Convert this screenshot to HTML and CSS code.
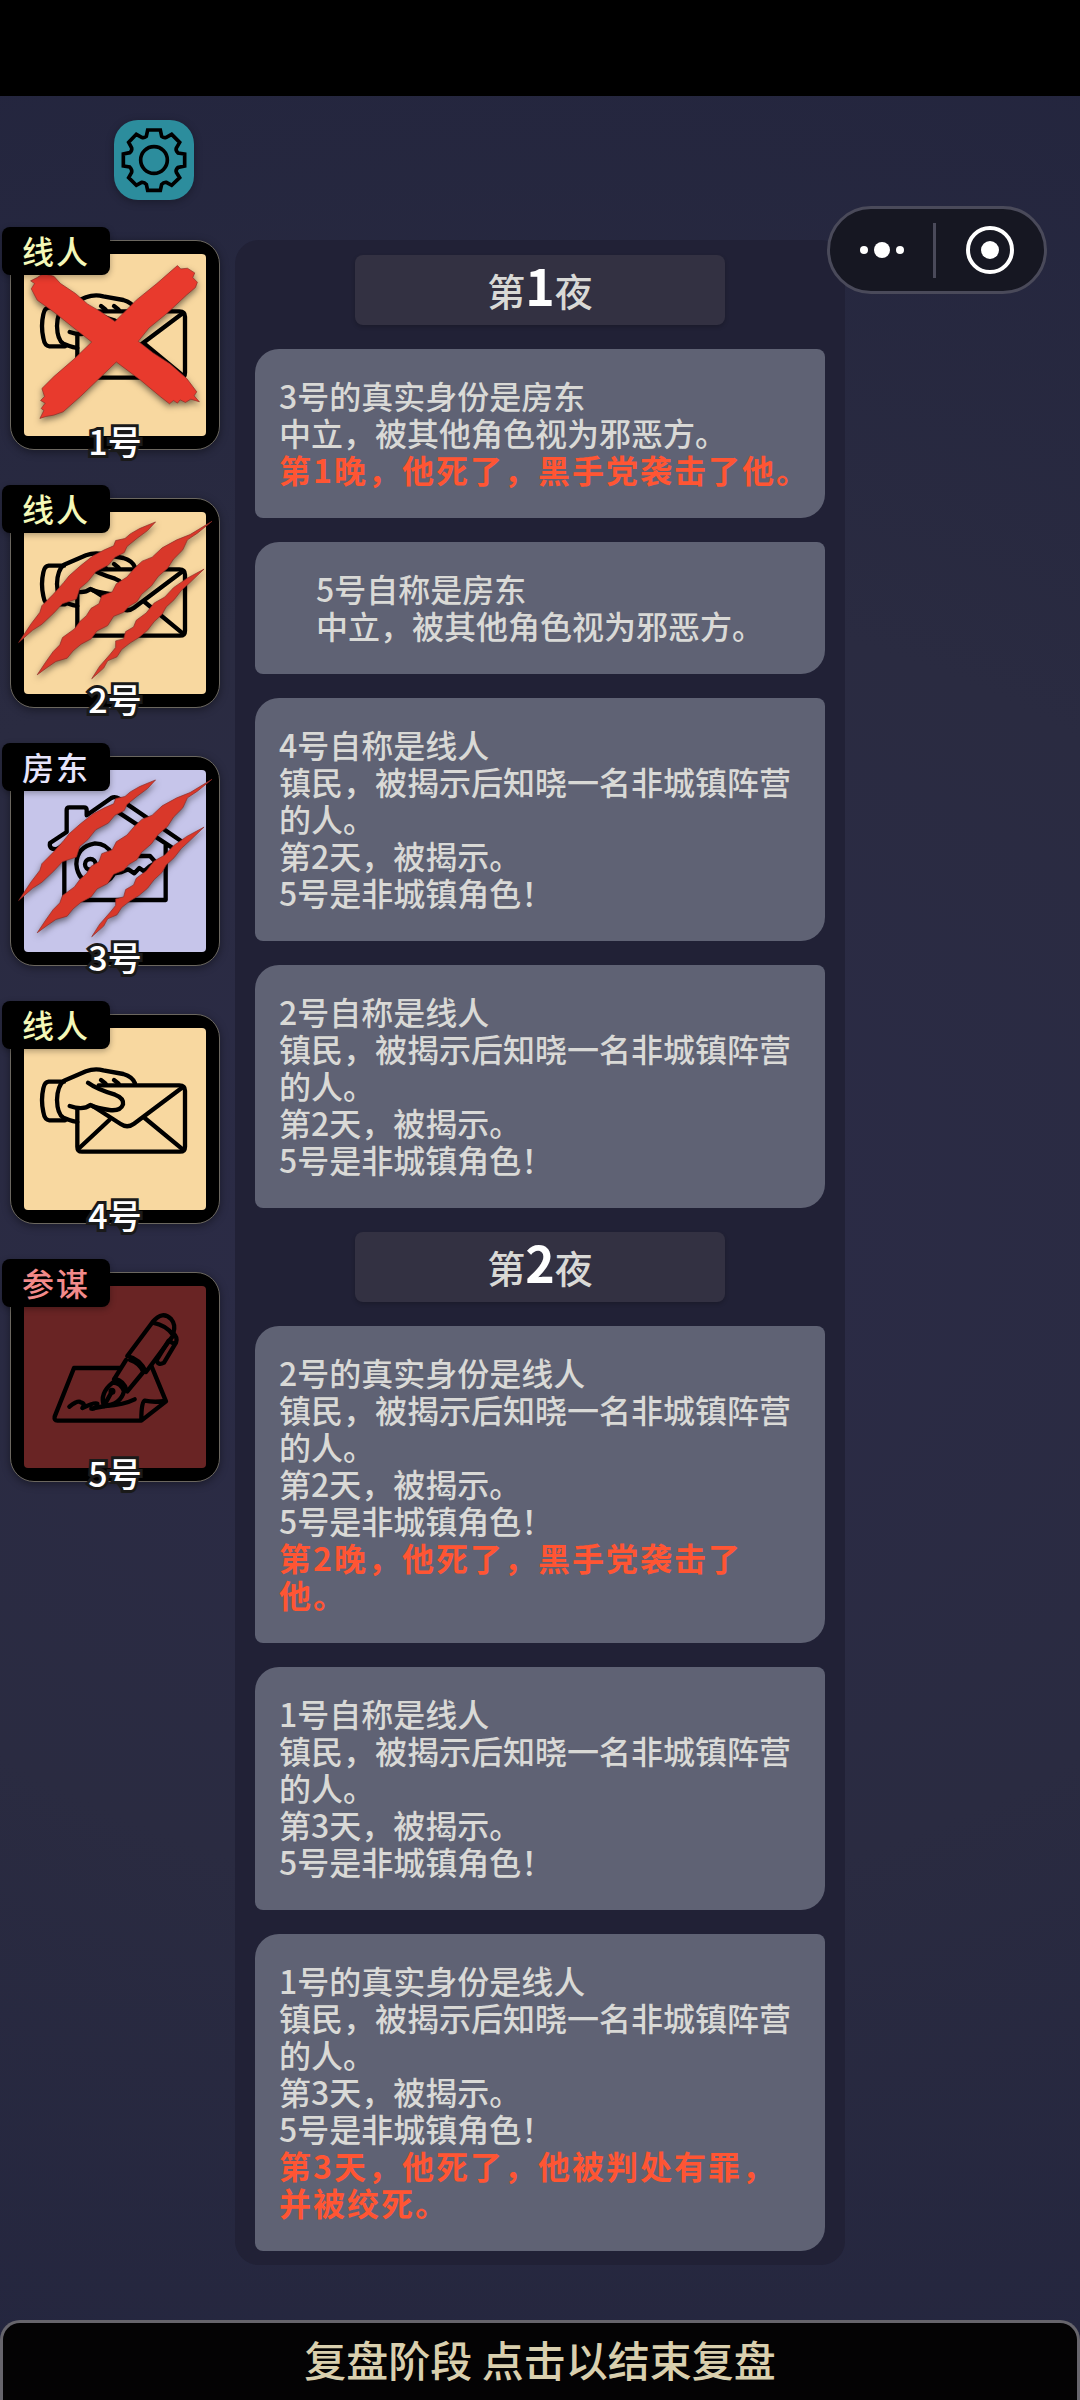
FILE: index.html
```html
<!DOCTYPE html>
<html lang="zh-CN">
<head>
  <meta charset="UTF-8">
  <meta name="viewport" content="width=device-width, initial-scale=1.0">
  <title>复盘阶段</title>
  <link rel="stylesheet" href="styles.css">
</head>
<body>

<!-- 图标库 -->
<svg class="sprite" aria-hidden="true">
  <symbol id="icon-letter" viewBox="72 114 546 546">
    <path d="M192 275H146Q134 276 130 295Q122 330 130 366Q134 390 148 391H195"/>
    <path d="M232 396Q205 390 190 383Q172 372 171 330Q172 288 192 272L258 244Q284 234 310 241L370 252Q398 260 405 280"/>
    <path d="M264 278Q290 297 345 314Q372 324 369 343Q362 364 328 360Q290 355 271 345Q250 362 209 348"/>
    <path d="M303 270l14 11M342 270l14 11"/>
    <path d="M296 286H538Q555 286 555 302V470Q555 485 540 485H246Q232 485 232 470V356"/>
    <path d="M546 293L402 401Q382 416 362 402L278 348M328 390L238 474M434 384L549 479"/>
  </symbol>
  <symbol id="icon-house" viewBox="72 120 546 546">
    <path d="M172 357Q146 360 150 339L200 306V240Q200 232 208 232H252Q260 232 260 240V256L334 204Q345 198 357 206L542 332"/>
    <path d="M174 356L330 250Q345 240 360 250L515 352M193 350V510H497V346"/>
    <path d="M338 374Q320 340 285 340Q230 350 229 402Q233 455 285 464Q325 462 343 430L365 426L385 418L403 430L418 414L432 424L448 410L468 398L450 378H338"/>
    <circle cx="271" cy="403" r="16"/>
  </symbol>
  <symbol id="icon-pen" viewBox="72 108 546 546">
    <path d="M360 354H222L164 500Q162 512 172 512H424L498 454L455 350M424 510Q424 455 434 452Q462 458 496 453"/>
    <path d="M208 470Q234 450 242 457Q258 460 247 474Q285 455 292 461Q290 478 274 476L316 468Q372 464 404 448"/>
    <path d="M382 318L458 216Q488 180 514 208Q528 224 520 250M458 218Q500 226 520 256L438 366Q420 326 382 318M378 330L342 388M390 330Q420 340 430 366L382 424"/>
    <path d="M344 386Q374 394 380 422M338 398Q298 430 312 468Q362 464 372 424Q362 398 338 398M336 424L314 464"/>
    <path d="M520 250Q534 262 528 278L492 338Q474 348 470 330L506 272L520 280"/>
    <circle cx="336" cy="424" r="4"/>
  </symbol>
  <symbol id="mark-claw" viewBox="31 87 626 626">
    <path d="M54 519L92 462L118 428L124 408L158 374L190 338L206 318L240 288L278 258L312 240L340 228L346 212L374 206L390 192L418 176L466 156L442 182L412 204L380 230L372 248L344 262L324 286L286 306L262 336L238 356L228 388L186 402L160 430L124 464L96 482Z"/>
    <path d="M110 616L134 580L158 546L178 526L186 504L222 478L238 456L258 438L272 416L296 402L304 378L336 366L348 342L380 322L404 294L426 274L456 262L486 234L530 210L570 194L636 154L592 190L562 210L548 240L520 268L502 296L474 320L454 348L424 374L410 396L386 410L370 428L340 440L322 468L290 484L272 508L242 524L218 544L200 566L166 576L140 594Z"/>
    <path d="M274 628L298 590L328 556L346 534L346 514L370 508L376 486L400 472L408 452L438 430L462 400L494 382L520 354L560 326L612 298L568 340L544 362L522 390L498 412L486 434L462 456L442 482L416 504L390 520L364 540L350 562L322 574L310 596Z"/>
  </symbol>
  <symbol id="mark-cross" viewBox="31 482 626 626">
    <path d="M128 580L160 588L180 610L225 640L262 672L300 694L344 724L408 660L470 610L518 568L532 556L542 566L562 564L584 578L578 592L592 606L586 622L560 644L500 700L446 744L414 784L458 818L510 852L560 896L590 936L582 948L598 966L572 958L556 968L540 960L532 970L520 962L508 972L480 950L420 900L348 846L290 902L240 950L188 996L160 1006L136 1010L118 1016L130 992L122 986L134 970L120 962L132 950L124 926L160 890L220 838L274 786L228 750L160 696L110 660L92 626L102 610L90 602L110 592Z"/>
  </symbol>
</svg>

<div class="status-bar"></div>

<header class="top-bar">
  <button class="settings" aria-label="设置">
    <svg viewBox="342 120 240 240">
      <path d="M443 150H481L485 169Q492 175 499 172L515 163L539 187L529 204Q526 211 534 219L554 222V258L534 262Q526 270 529 277L539 293L515 316L499 307Q491 306 485 313L481 331H443L439 313Q433 306 425 307L409 316L386 293L395 277Q397 269 389 261L370 258V222L389 218Q397 212 395 204L386 187L409 163L425 172Q432 175 439 169Z"/>
      <circle cx="462" cy="240" r="40"/>
    </svg>
  </button>
  <div class="capsule">
    <button class="more" aria-label="更多">
      <svg viewBox="0 0 48 16"><circle cx="6" cy="8" r="4"/><circle cx="24" cy="8" r="8"/><circle cx="42" cy="8" r="4"/></svg>
    </button>
    <span class="capsule-line"></span>
    <button aria-label="关闭">
      <svg viewBox="0 0 48 48"><circle class="ring" cx="24" cy="24" r="22"/><circle cx="24" cy="24" r="9"/></svg>
    </button>
  </div>
</header>

<main class="board">
  <!-- 玩家列表 -->
  <aside class="players">
    <div class="player town">
      <svg class="art"><use href="#icon-letter"/></svg>
      <svg class="mark cross"><use href="#mark-cross"/></svg>
      <span class="role">线人</span>
      <span class="seat">1号</span>
    </div>
    <div class="player town">
      <svg class="art"><use href="#icon-letter"/></svg>
      <svg class="mark"><use href="#mark-claw"/></svg>
      <span class="role">线人</span>
      <span class="seat">2号</span>
    </div>
    <div class="player neutral">
      <svg class="art"><use href="#icon-house"/></svg>
      <svg class="mark"><use href="#mark-claw"/></svg>
      <span class="role">房东</span>
      <span class="seat">3号</span>
    </div>
    <div class="player town">
      <svg class="art"><use href="#icon-letter"/></svg>
      <span class="role">线人</span>
      <span class="seat">4号</span>
    </div>
    <div class="player mafia">
      <svg class="art"><use href="#icon-pen"/></svg>
      <span class="role">参谋</span>
      <span class="seat">5号</span>
    </div>
  </aside>

  <!-- 复盘记录 -->
  <section class="log">
    <h2 class="night">第<b>1</b>夜</h2>
    <div class="entry">
      <p>3号的真实身份是房东<br>中立，被其他角色视为邪恶方。<br><strong>第1晚，他死了，黑手党袭击了他。</strong></p>
    </div>
    <div class="entry">
      <p>5号自称是房东<br>中立，被其他角色视为邪恶方。</p>
    </div>
    <div class="entry">
      <p>4号自称是线人<br>镇民，被揭示后知晓一名非城镇阵营的人。<br>第2天，被揭示。<br>5号是非城镇角色！</p>
    </div>
    <div class="entry">
      <p>2号自称是线人<br>镇民，被揭示后知晓一名非城镇阵营的人。<br>第2天，被揭示。<br>5号是非城镇角色！</p>
    </div>
    <h2 class="night">第<b>2</b>夜</h2>
    <div class="entry">
      <p>2号的真实身份是线人<br>镇民，被揭示后知晓一名非城镇阵营的人。<br>第2天，被揭示。<br>5号是非城镇角色！<br><strong>第2晚，他死了，黑手党袭击了<br>他。</strong></p>
    </div>
    <div class="entry">
      <p>1号自称是线人<br>镇民，被揭示后知晓一名非城镇阵营的人。<br>第3天，被揭示。<br>5号是非城镇角色！</p>
    </div>
    <div class="entry">
      <p>1号的真实身份是线人<br>镇民，被揭示后知晓一名非城镇阵营的人。<br>第3天，被揭示。<br>5号是非城镇角色！<br><strong>第3天，他死了，他被判处有罪，<br>并被绞死。</strong></p>
    </div>
  </section>
</main>

<button class="finish">复盘阶段 点击以结束复盘</button>

</body>
</html>
```
FILE: styles.css
```css
:root {
  --text: #d9d9d6;
  --danger: #ff5533;
  --panel: #212136;
  --entry: #5f6274;
}

* {
  box-sizing: border-box;
}

body {
  margin: 0;
  min-height: 100vh;
  display: flex;
  flex-direction: column;
  font-family: "Noto Sans CJK SC", sans-serif;
  font-weight: 500;
  color: var(--text);
  background: radial-gradient(ellipse 160% 54% at 50% 52%, #2b2b47, #2a2b41 50%, #23253e);
}

button {
  padding: 0;
  border: none;
  background: none;
  font-family: inherit;
  cursor: pointer;
}

.sprite {
  position: absolute;
  width: 0;
  height: 0;
}

.status-bar {
  height: 96px;
  background: #000;
}

/* 顶部 */
.top-bar {
  position: relative;
  padding: 24px 114px 40px;
}

.settings {
  display: block;
  width: 80px;
  height: 80px;
  border-radius: 24px;
  background: #2c8d9d;
  box-shadow: 0 2px 8px rgba(0, 0, 0, 0.3);
}

.settings svg {
  display: block;
  fill: none;
  stroke: #000;
  stroke-width: 11;
}

.capsule {
  position: absolute;
  top: 110px;
  right: 33px;
  width: 220px;
  height: 88px;
  display: flex;
  align-items: center;
  border: 3px solid #4a4a5a;
  border-radius: 44px;
  background: #161722;
}

.capsule button {
  flex: 1;
  height: 100%;
  display: flex;
  align-items: center;
  justify-content: center;
}

.capsule .more {
  flex: 0 0 103px;
}

.capsule svg {
  width: 48px;
  fill: #fff;
}

.capsule .ring {
  fill: none;
  stroke: #fff;
  stroke-width: 4;
}

.capsule-line {
  width: 3px;
  height: 55px;
  background: #4a4a5a;
}

.board {
  display: grid;
  grid-template-columns: 235px minmax(0, 1fr) 235px;
  align-items: start;
  margin-bottom: 54px;
}

/* 玩家卡片 */
.players {
  display: flex;
  flex-direction: column;
  gap: 48px;
  padding: 0 10px;
}

.player {
  position: relative;
  width: 210px;
  height: 210px;
  padding: 13px;
  border: 1px solid #6b675f;
  border-radius: 24px;
  background: #000;
  box-shadow: 0 2px 8px rgba(0, 0, 0, 0.4);
}

.art {
  display: block;
  width: 182px;
  height: 182px;
  border-radius: 4px;
  fill: none;
  stroke: #000;
  stroke-width: 13;
  stroke-linecap: round;
  stroke-linejoin: round;
}

.town .art {
  background: #f8d8a0;
}

.neutral .art {
  background: #c6c5ea;
}

.mafia .art {
  background: #692424;
}

.mark {
  position: absolute;
  inset: 0;
  width: 100%;
  height: 100%;
  fill: #d9382a;
  stroke: #8c2a26;
  stroke-width: 2;
  filter: drop-shadow(0 3px 3px rgba(0, 0, 0, 0.5));
}

.mark.cross {
  fill: #e83a2d;
}

.role {
  position: absolute;
  top: -14px;
  left: -9px;
  width: 108px;
  height: 48px;
  border-radius: 8px;
  background: #000;
  box-shadow: 0 2px 6px rgba(0, 0, 0, 0.3);
  font-size: 32px;
  line-height: 46px;
  letter-spacing: 2px;
  text-align: center;
}

.town .role {
  color: #f4f8b8;
}

.neutral .role {
  color: #e6e4fb;
}

.mafia .role {
  color: #f28a8a;
}

.seat {
  position: absolute;
  bottom: -12px;
  left: 0;
  width: 100%;
  color: #fff;
  font-size: 34px;
  line-height: 40px;
  text-align: center;
  -webkit-text-stroke: 6px #1a1a1a;
  paint-order: stroke fill;
}

/* 复盘记录 */
.log {
  display: flex;
  flex-direction: column;
  align-items: center;
  gap: 24px;
  padding: 15px 20px 14px;
  border-radius: 24px;
  background: var(--panel);
}

.night {
  width: 65%;
  height: 70px;
  margin: 0;
  border-radius: 8px;
  background: #333142;
  box-shadow: 0 2px 4px rgba(0, 0, 0, 0.2);
  font-size: 38px;
  font-weight: 500;
  line-height: 70px;
  text-align: center;
}

.night b {
  color: #fff;
  font-size: 50px;
  line-height: 50px;
}

.entry {
  width: 100%;
  padding: 28px 24px 30px;
  display: flex;
  justify-content: center;
  border-radius: 24px 8px 24px 8px;
  background: var(--entry);
}

.entry p {
  min-width: 0;
  margin: 0;
  font-size: 32px;
  line-height: 37px;
}

.entry strong {
  color: var(--danger);
  letter-spacing: 2px;
  white-space: nowrap;
}

/* 底部按钮 */
.finish {
  height: 80px;
  margin-top: auto;
  padding-bottom: 6px;
  border: 3px solid #67656c;
  border-bottom: none;
  border-radius: 20px 20px 0 0;
  background: #040304;
  color: #d9cfae;
  font-size: 42px;
  font-weight: 500;
  line-height: 60px;
}
```
